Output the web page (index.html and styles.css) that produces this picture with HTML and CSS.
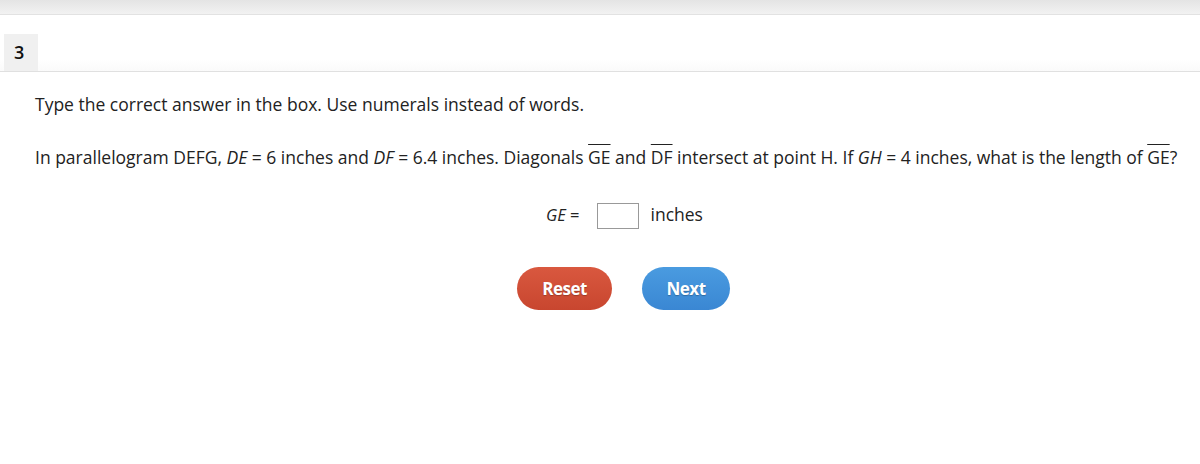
FILE: index.html
```html
<!DOCTYPE html>
<html>
<head>
<meta charset="utf-8">
<link rel="stylesheet" href="styles.css">
</head>
<body>
<div class="topbar"></div>
<div class="header">
  <div class="qnum">3</div>
</div>
<div class="content">
  <p class="instr">Type the correct answer in the box. Use numerals instead of words.</p>
  <p class="question">In parallelogram DEFG, <i>DE</i> = 6 inches and <i>DF</i> = 6.4 inches. Diagonals <span class="ov">GE</span> and <span class="ov">DF</span> intersect at point H. If <i>GH</i> = 4 inches, what is the length of <span class="ov">GE</span>?</p>
  <div class="answer">
    <span class="lbl"><i>GE</i> =</span>
    <span class="box"></span>
    <span class="unit">inches</span>
  </div>
  <div class="buttons">
    <button class="btn reset">Reset</button>
    <button class="btn next">Next</button>
  </div>
</div>
</body>
</html>
```
FILE: styles.css
```css
* { box-sizing: border-box; }
html, body { margin: 0; padding: 0; background: #fff; }
body {
  font-family: "Open Sans", "Liberation Sans", sans-serif;
  color: #222;
  width: 1200px;
  height: 464px;
  overflow: hidden;
}
.topbar {
  height: 15px;
  background: linear-gradient(#e4e4e4, #f2f2f2);
  border-bottom: 1px solid #e2e2e2;
}
.header {
  height: 57px;
  padding-top: 19px;
  padding-left: 4px;
  border-bottom: 1px solid #e0e0e0;
  background: linear-gradient(#fff 80%, #fafafa);
}
.qnum {
  width: 34px;
  height: 37px;
  background: #f0f0f0;
  font-size: 18px;
  font-weight: 600;
  line-height: 37px;
  padding-left: 10px;
  color: #111;
}
.content {
  padding-left: 35px;
}
.instr {
  margin: 21px 0 0;
  font-size: 17.5px;
  line-height: 22px;
}
.question {
  margin: 31px 0 0;
  font-size: 17.5px;
  line-height: 22px;
  white-space: nowrap;
}
.question i { letter-spacing: 0; }
.ov {
  text-decoration: overline;
  text-decoration-thickness: 1px;
}
.answer {
  display: flex;
  align-items: center;
  justify-content: center;
  margin-top: 35px;
  margin-left: -35px;
  padding-left: 49px;
  font-size: 17.5px;
  height: 26px;
}
.lbl, .unit { padding-bottom: 4px; }
.lbl { margin-right: 17px; font-size: 16.5px; }
.box {
  width: 42px;
  height: 26px;
  border: 1px solid #999;
  background: #fff;
  margin-right: 12px;
}
.buttons {
  display: flex;
  justify-content: center;
  gap: 30px;
  margin-top: 38px;
  margin-left: -35px;
  padding-left: 47px;
}
.btn {
  height: 43px;
  border: none;
  border-radius: 22px;
  color: #fff;
  font-family: "Open Sans", "Liberation Sans", sans-serif;
  font-size: 17px;
  font-weight: 700;
  letter-spacing: -0.5px;
  text-shadow: 0 1px 1px rgba(0,0,0,0.25);
  padding: 0;
}
.reset {
  width: 95px;
  background: linear-gradient(#d9583f, #c8462f);
}
.next {
  width: 88px;
  background: linear-gradient(#4a9be0, #3a87d3);
}
```
